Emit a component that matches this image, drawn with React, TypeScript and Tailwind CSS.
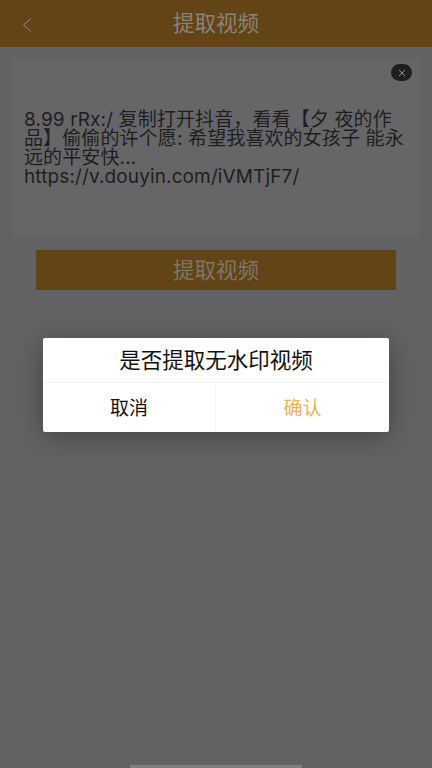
export default function App() {
  const cjk = "font-['Liberation_Sans','Noto_Sans_CJK_SC',sans-serif]";
  return (
    <div className={`relative flex h-[768px] w-[432px] flex-col overflow-hidden bg-[#626264] ${cjk}`}>
      <header className="relative flex h-[47px] shrink-0 items-center justify-center bg-[#634417] pt-[3px]">
        <svg className="absolute left-[21px] top-[17px]" width="12" height="16" viewBox="0 0 12 16" fill="none" stroke="#8f8a80" strokeWidth="1">
          <path d="M10 1.5 L2.5 8 L10 14.5" />
        </svg>
        <h1 className="text-[21.5px] leading-none font-normal text-[#8a8375]">提取视频</h1>
      </header>
      <section className="relative mx-3 mt-[11px] h-[178px] bg-[#666668] px-3 pt-[52px]">
        <div className="absolute right-[8px] top-[6px] flex h-[17px] w-[21px] items-center justify-center rounded-full bg-[#1f1f1f]">
          <svg width="8" height="8" viewBox="0 0 8 8" stroke="#8a8a8a" strokeWidth="1">
            <path d="M1 1 L7 7 M7 1 L1 7" />
          </svg>
        </div>
        <p className="font-['Inter','Noto_Sans_CJK_SC',sans-serif] text-[19px] leading-[19px] tracking-[0.12px] text-[#1e1e20]">
          8.99 rRx:/ 复制打开抖音，看看【夕 夜的作品】偷偷的许个愿: 希望我喜欢的女孩子 能永远的平安快...
          <br />
          https://v.douyin.com/iVMTjF7/
        </p>
      </section>
      <button className="mx-9 mt-[14px] flex h-10 shrink-0 items-center justify-center bg-[#634417] pt-[3px] text-[21.5px] text-[#7d7668]">
        提取视频
      </button>
      <div className="absolute left-[43px] top-[338px] w-[346px] rounded-[2px] bg-white shadow-[0_4px_24px_rgba(0,0,0,0.3)]">
        <div className="flex h-[45px] items-center justify-center border-b border-[#f3f3f3] pt-[2px] text-[21.5px] text-[#111]">
          是否提取无水印视频
        </div>
        <div className="flex h-[49px]">
          <div className="flex w-[173px] items-center justify-center border-r border-[#f3f3f3] pt-[3px] text-[19px] text-[#111]">取消</div>
          <div className="flex flex-1 items-center justify-center pt-[3px] text-[19px] text-[#eeb155]">确认</div>
        </div>
      </div>
      <div className="absolute bottom-0 left-[130px] h-[3px] w-[172px] bg-[#7e7e80]" />
    </div>
  );
}
